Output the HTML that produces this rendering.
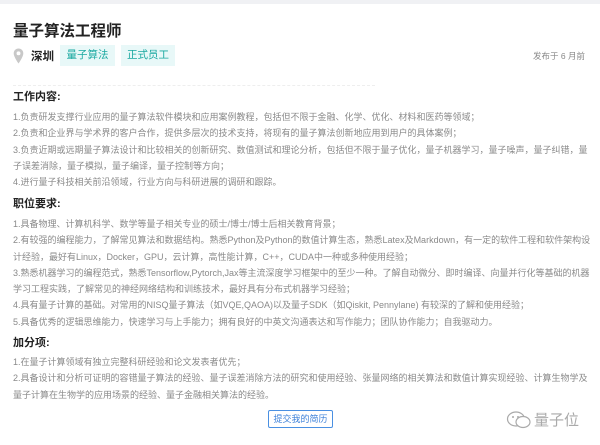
<!DOCTYPE html>
<html><head><meta charset="utf-8"><style>
*{margin:0;padding:0;box-sizing:border-box}
body{width:600px;height:445px;background:#fff;font-family:"Liberation Sans","Noto Sans CJK SC",sans-serif;position:relative;overflow:hidden;color:#222}
.top{position:absolute;left:0;top:0;width:600px;height:4px;background:#f0f1f4}
.abs{position:absolute;white-space:nowrap}
h1{position:absolute;left:13px;top:19px;font-size:15.5px;font-weight:bold;color:#222}
.tag{position:absolute;top:45px;height:21px;line-height:21px;background:#e8f8f8;color:#19a8a0;font-size:10.5px;text-align:center}
h2{position:absolute;left:13px;font-size:11px;font-weight:bold;color:#222}
.p{position:absolute;left:13px;width:578px;font-size:9px;line-height:16.3px;color:#8a8a8a}
.btn{position:absolute;left:268px;top:410px;width:65px;height:18px;border:1px solid #4a90e2;border-radius:2px;color:#3a7fd8;font-size:9px;line-height:16px;text-align:center}
</style></head><body>
<div class="top"></div>
<h1>量子算法工程师</h1>
<svg class="abs" style="left:13px;top:48px" width="11" height="16" viewBox="0 0 10 15"><path d="M5 0.5C2.4 0.5 0.5 2.5 0.5 5c0 3.3 4.5 9.5 4.5 9.5S9.5 8.3 9.5 5C9.5 2.5 7.6 0.5 5 0.5z" fill="#c8c8c8"/><circle cx="5" cy="5" r="1.8" fill="#fff"/></svg>
<div class="abs" style="left:31px;top:48px;font-size:11.5px;font-weight:bold;color:#222">深圳</div>
<div class="tag" style="left:60px;width:55px">量子算法</div>
<div class="tag" style="left:121px;width:54px">正式员工</div>
<div class="abs" style="left:533px;top:50px;font-size:8.5px;color:#888">发布于 6 月前</div>
<div class="abs" style="left:13px;top:85px;width:362px;border-top:1px dashed #eee"></div>
<h2 style="top:88px">工作内容:</h2>
<div class="p" style="top:109px">1.负责研发支撑行业应用的量子算法软件模块和应用案例教程，包括但不限于金融、化学、优化、材料和医药等领域；<br>2.负责和企业界与学术界的客户合作，提供多层次的技术支持，将现有的量子算法创新地应用到用户的具体案例；<br>3.负责近期或远期量子算法设计和比较相关的创新研究、数值测试和理论分析，包括但不限于量子优化，量子机器学习，量子噪声，量子纠错，量子误差消除，量子模拟，量子编译，量子控制等方向；<br>4.进行量子科技相关前沿领域，行业方向与科研进展的调研和跟踪。</div>
<h2 style="top:195px">职位要求:</h2>
<div class="p" style="top:216px">1.具备物理、计算机科学、数学等量子相关专业的硕士/博士/博士后相关教育背景；<br>2.有较强的编程能力，了解常见算法和数据结构。熟悉Python及Python的数值计算生态，熟悉Latex及Markdown，有一定的软件工程和软件架构设计经验，最好有Linux，Docker，GPU，云计算，高性能计算，C++，CUDA中一种或多种使用经验；<br>3.熟悉机器学习的编程范式，熟悉Tensorflow,Pytorch,Jax等主流深度学习框架中的至少一种。了解自动微分、即时编译、向量并行化等基础的机器学习工程实践，了解常见的神经网络结构和训练技术，最好具有分布式机器学习经验；<br>4.具有量子计算的基础。对常用的NISQ量子算法（如VQE,QAOA)以及量子SDK（如Qiskit, Pennylane) 有较深的了解和使用经验；<br>5.具备优秀的逻辑思维能力，快速学习与上手能力；拥有良好的中英文沟通表达和写作能力；团队协作能力；自我驱动力。</div>
<h2 style="top:334px">加分项:</h2>
<div class="p" style="top:354px">1.在量子计算领域有独立完整科研经验和论文发表者优先；<br>2.具备设计和分析可证明的容错量子算法的经验、量子误差消除方法的研究和使用经验、张量网络的相关算法和数值计算实现经验、计算生物学及量子计算在生物学的应用场景的经验、量子金融相关算法的经验。</div>
<div class="btn">提交我的简历</div>
<svg class="abs" style="left:506px;top:410px" width="26" height="20" viewBox="0 0 26 20"><ellipse cx="10" cy="9" rx="8.5" ry="7" fill="none" stroke="#aaa" stroke-width="1.2"/><ellipse cx="17" cy="12" rx="7" ry="5.5" fill="#fff" stroke="#aaa" stroke-width="1.2"/><circle cx="7" cy="7" r="1" fill="#aaa"/><circle cx="12" cy="7" r="1" fill="#aaa"/></svg>
<div class="abs" style="left:534px;top:409px;font-size:15px;color:#aaa">量子位</div>
</body></html>
